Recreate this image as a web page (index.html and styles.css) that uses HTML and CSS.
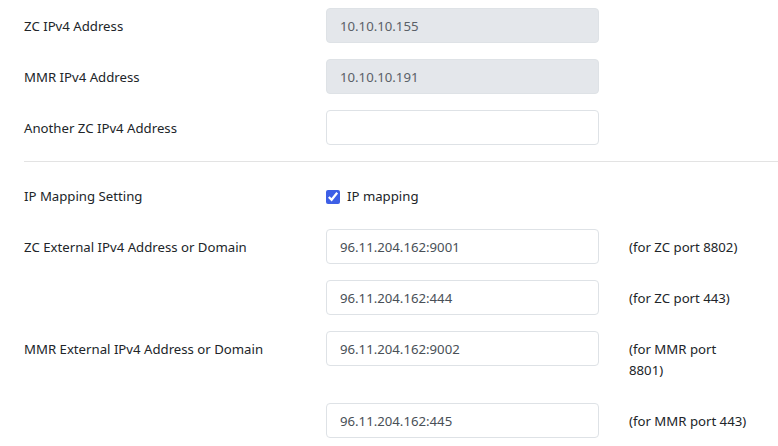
FILE: index.html
```
<!doctype html>
<html>
	<head>
		<title>ip settings</title>
		<meta charset="utf-8" />
		<link rel="stylesheet" href="styles.css">
	</head>
	<body>
		<form class="settings">
			<div class="row">
				<label class="lbl">ZC IPv4 Address</label>
				<input class="field" type="text" value="10.10.10.155" disabled />
			</div>
			<div class="row">
				<label class="lbl">MMR IPv4 Address</label>
				<input class="field" type="text" value="10.10.10.191" disabled />
			</div>
			<div class="row">
				<label class="lbl">Another ZC IPv4 Address</label>
				<input class="field" type="text" value="" />
			</div>
			<hr class="divider" />
			<div class="row">
				<label class="lbl">IP Mapping Setting</label>
				<label class="check"><input type="checkbox" checked /> IP mapping</label>
			</div>
			<div class="row">
				<label class="lbl">ZC External IPv4 Address or Domain</label>
				<input class="field" type="text" value="96.11.204.162:9001" />
				<span class="note">(for ZC port 8802)</span>
			</div>
			<div class="row">
				<span></span>
				<input class="field" type="text" value="96.11.204.162:444" />
				<span class="note">(for ZC port 443)</span>
			</div>
			<div class="row">
				<label class="lbl">MMR External IPv4 Address or Domain</label>
				<input class="field" type="text" value="96.11.204.162:9002" />
				<span class="note">(for MMR port 8801)</span>
			</div>
			<div class="row">
				<span></span>
				<input class="field" type="text" value="96.11.204.162:445" />
				<span class="note">(for MMR port 443)</span>
			</div>
		</form>
	</body>
</html>
```

FILE: styles.css
```
* { margin: 0; padding: 0; box-sizing: border-box; }
body { font-family: "Noto Sans", "Open Sans", sans-serif; font-size: 13.2px; line-height: 21px; color: #212529; background: #fff; overflow: hidden; }
.settings { padding: 8px 0 0 24px; }
.row { display: grid; grid-template-columns: 272px 273px 124px; column-gap: 30px; align-items: start; margin-bottom: 16px; }
.lbl { padding: 8px 0 6px; }
.field { height: 35px; width: 273px; padding: 1px 13px 0; border: 1px solid #dee2e6; border-radius: 4px; font: inherit; color: #495057; background: #fff; }
.field:disabled { background: #e4e7eb; color: #5b6168; }
.divider { border: 0; border-top: 1px solid #e3e3e3; margin: 0 0 16px; }
.check { padding: 8px 0 6px; display: flex; align-items: center; gap: 7px; }
.check input { width: 14px; height: 14px; accent-color: #3d5fe6; margin: 0; }
.note { padding: 8px 0 6px; }
```
